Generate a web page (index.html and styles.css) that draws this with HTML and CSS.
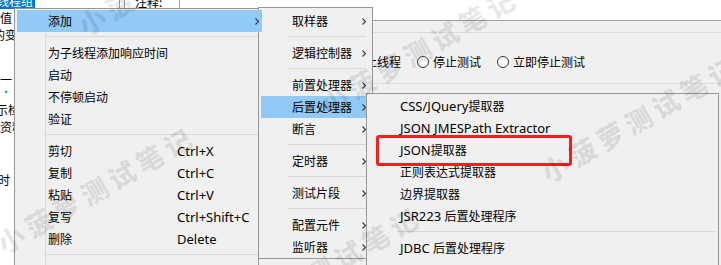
FILE: index.html
```html
<!DOCTYPE html>
<html lang="zh-CN">
<head>
<meta charset="utf-8">
<title>JMeter menu</title>
<link rel="stylesheet" href="styles.css">
</head>
<body>
<div class="app">
  <div class="tree">
    <div class="tree-sel"><span class="sel-text">线程组</span></div>
    <div class="n n1">值</div>
    <div class="n n2">的变量</div>
    <div class="n n3">一 <span class="or">J</span></div>
    <div class="n n4"><span class="tl">·</span> JS</div>
    <div class="n n5">示检</div>
    <div class="n n6">资料</div>
    <div class="n n7">时</div>
  </div>
  <div class="split"></div>
  <div class="detail">
    <div class="comment-row">
      <span class="comment-label">注释:</span>
      <div class="comment-input"></div>
    </div>
    <div class="group">
      <div class="group-box">
        <div class="radios">
          <span class="radio"><span class="circle"></span>停止线程</span>
          <span class="radio"><span class="circle"></span>停止测试</span>
          <span class="radio"><span class="circle"></span>立即停止测试</span>
        </div>
      </div>
    </div>
  </div>
</div>

<div class="menu m1">
  <div class="item sel first"><span class="label">添加</span><svg class="arrow" width="4" height="7" viewBox="0 0 4 7"><path d="M0.5 0.5 L3.5 3.5 L0.5 6.5" /></svg></div>
  <div class="sep"></div>
  <div class="item"><span class="label">为子线程添加响应时间</span></div>
  <div class="item"><span class="label">启动</span></div>
  <div class="item"><span class="label">不停顿启动</span></div>
  <div class="item"><span class="label">验证</span></div>
  <div class="sep"></div>
  <div class="item"><span class="label">剪切</span><span class="key en">Ctrl+X</span></div>
  <div class="item"><span class="label">复制</span><span class="key en">Ctrl+C</span></div>
  <div class="item"><span class="label">粘贴</span><span class="key en">Ctrl+V</span></div>
  <div class="item"><span class="label">复写</span><span class="key en">Ctrl+Shift+C</span></div>
  <div class="item"><span class="label">删除</span><span class="key en">Delete</span></div>
  <div class="sep"></div>
</div>

<div class="menu m2">
  <div class="item"><span class="label">取样器</span><svg class="arrow" width="4" height="7" viewBox="0 0 4 7"><path d="M0.5 0.5 L3.5 3.5 L0.5 6.5" /></svg></div>
  <div class="sep"></div>
  <div class="item"><span class="label">逻辑控制器</span><svg class="arrow" width="4" height="7" viewBox="0 0 4 7"><path d="M0.5 0.5 L3.5 3.5 L0.5 6.5" /></svg></div>
  <div class="sep"></div>
  <div class="item"><span class="label">前置处理器</span><svg class="arrow" width="4" height="7" viewBox="0 0 4 7"><path d="M0.5 0.5 L3.5 3.5 L0.5 6.5" /></svg></div>
  <div class="item sel"><span class="label">后置处理器</span><svg class="arrow" width="4" height="7" viewBox="0 0 4 7"><path d="M0.5 0.5 L3.5 3.5 L0.5 6.5" /></svg></div>
  <div class="item"><span class="label">断言</span><svg class="arrow" width="4" height="7" viewBox="0 0 4 7"><path d="M0.5 0.5 L3.5 3.5 L0.5 6.5" /></svg></div>
  <div class="sep"></div>
  <div class="item"><span class="label">定时器</span><svg class="arrow" width="4" height="7" viewBox="0 0 4 7"><path d="M0.5 0.5 L3.5 3.5 L0.5 6.5" /></svg></div>
  <div class="sep"></div>
  <div class="item"><span class="label">测试片段</span><svg class="arrow" width="4" height="7" viewBox="0 0 4 7"><path d="M0.5 0.5 L3.5 3.5 L0.5 6.5" /></svg></div>
  <div class="sep"></div>
  <div class="item"><span class="label">配置元件</span><svg class="arrow" width="4" height="7" viewBox="0 0 4 7"><path d="M0.5 0.5 L3.5 3.5 L0.5 6.5" /></svg></div>
  <div class="item"><span class="label">监听器</span><svg class="arrow" width="4" height="7" viewBox="0 0 4 7"><path d="M0.5 0.5 L3.5 3.5 L0.5 6.5" /></svg></div>
</div>

<div class="menu m3">
  <div class="item"><span class="label"><span class="en">CSS/JQuery</span>提取器</span></div>
  <div class="item"><span class="label en">JSON JMESPath Extractor</span></div>
  <div class="item"><span class="label"><span class="en">JSON</span>提取器</span></div>
  <div class="item"><span class="label">正则表达式提取器</span></div>
  <div class="item"><span class="label">边界提取器</span></div>
  <div class="item"><span class="label"><span class="en">JSR223 </span>后置处理程序</span></div>
  <div class="sep"></div>
  <div class="item"><span class="label"><span class="en">JDBC </span>后置处理程序</span></div>
</div>

<div class="highlight-box"></div>

<div class="wm wm-a">小菠萝测试笔记</div>
<div class="wm wm-b">小菠萝测试笔记</div>
<div class="wm wm-c">小菠萝测试笔记</div>
<div class="wm wm-d">小菠萝测试笔记</div>
<div class="wm wm-e">小菠萝测试笔记</div>
</body>
</html>
```

FILE: styles.css
```css
* { box-sizing: border-box; }

html, body {
  margin: 0;
  padding: 0;
}

body {
  width: 721px;
  height: 265px;
  overflow: hidden;
  position: relative;
  background: #ffffff;
  font-family: "Noto Sans", "Noto Sans CJK SC", sans-serif;
  font-size: 12px;
  color: #000;
}

.en { font-size: 13px; }

/* ---------- background application ---------- */
.app {
  display: flex;
  height: 265px;
}

.tree {
  width: 120px;
  border-right: 1px solid #a0a0a0;
  overflow: hidden;
  font-family: "Noto Sans CJK SC", sans-serif;
}

.tree-sel {
  height: 17px;
  margin-top: -8px;
  line-height: 17px;
  white-space: nowrap;
}

.sel-text {
  display: inline-block;
  margin-left: -3px;
  padding-right: 2px;
  background: #0078d7;
  color: #fff;
}

.n {
  height: 12px;
  line-height: 12px;
  white-space: nowrap;
}
.n1 { margin-top: 3px; }
.n2 { margin-top: 5px; margin-left: -7px; }
.n3 { margin-top: 33px; }
.n4 { margin-top: 0; }
.n5 { margin-top: 6px; margin-left: -4px; }
.n6 { margin-top: 5px; }
.n7 { margin-top: 41px; margin-left: -2px; }
.or { color: #c88a00; }
.tl { color: #1a9fa0; }

.split {
  width: 5px;
  border-right: 1px solid #a0a0a0;
}

.detail {
  flex: 1;
  display: flex;
  flex-direction: column;
}

.comment-row {
  height: 21px;
  border-bottom: 1px solid #a0a0a0;
  display: flex;
}

.comment-label {
  width: 54px;
  padding-left: 10px;
  line-height: 16px;
  margin-top: -6px;
  height: 16px;
  font-family: "Noto Sans CJK SC", sans-serif;
}

.comment-input {
  flex: 1;
  border-left: 1px solid #a0a0a0;
  background: #fff;
}

.group {
  flex: 1;
  background: #f0f0f0;
  padding-top: 11px;
}

.group-box {
  height: 52px;
  border-top: 1px solid #dcdcdc;
  border-bottom: 1px solid #dcdcdc;
}

.radios {
  margin-top: 21px;
  height: 16px;
  padding-left: 212px;
  display: flex;
  align-items: center;
  gap: 16px;
  font-family: "Noto Sans CJK SC", sans-serif;
  white-space: nowrap;
}

.radio {
  display: flex;
  align-items: center;
  line-height: 16px;
}

.circle {
  width: 12px;
  height: 12px;
  border: 1px solid #333;
  border-radius: 50%;
  background: #fff;
  margin-right: 4px;
}

/* ---------- popup menus ---------- */
.menu {
  position: absolute;
  background: #f0f0f0;
  border: 1px solid #979797;
  overflow: visible;
}

.item {
  height: 22px;
  margin: 0 2px;
  padding-left: 31px;
  display: flex;
  align-items: center;
  white-space: nowrap;
  position: relative;
}

.item.sel { background: #91c9f7; }

.arrow {
  margin-left: auto;
  display: block;
}
.arrow path {
  fill: none;
  stroke: #333;
  stroke-width: 1.1;
}

.sep {
  height: 1px;
  margin-top: 4px;
  margin-bottom: 5px;
  background: #d7d7d7;
}

.m1 {
  left: 14px;
  top: 8px;
  width: 245px;
  height: 257px;
  border-bottom: none;
  padding-top: 1px;
  z-index: 3;
}
.m1::after {
  content: "";
  position: absolute;
  left: 30px;
  top: 24px;
  bottom: 0;
  width: 1px;
  background: #dadada;
}
.m1 .item.first {
  margin-right: -4px;
  padding-right: 3px;
}
.m1 .label {
  width: 129px;
  flex: none;
}
.m1 .sep {
  margin-left: 30px;
  margin-right: 0;
  position: relative;
}

.m2 {
  left: 258px;
  top: 7px;
  width: 115px;
  height: 252px;
  padding-top: 2px;
  z-index: 2;
}
.m2 .item { padding-right: 4px; }
.m2 .sep {
  margin-left: 29px;
  margin-right: 6px;
}

.m3 {
  left: 366px;
  top: 93px;
  width: 353px;
  height: 172px;
  border-bottom: none;
  padding-top: 1px;
  z-index: 4;
}
.m3 .sep {
  margin-left: 30px;
  margin-right: 3px;
}

/* annotation */
.highlight-box {
  position: absolute;
  left: 376px;
  top: 135px;
  width: 196px;
  height: 31px;
  border: 3px solid #f51e1e;
  border-radius: 3px;
  z-index: 6;
}

/* watermark */
.wm {
  position: absolute;
  font-family: "Noto Sans CJK SC", sans-serif;
  font-weight: 900;
  font-size: 27px;
  letter-spacing: 5px;
  color: rgba(0, 0, 0, 0.09);
  white-space: nowrap;
  transform: translate(-50%, -50%) rotate(-30deg);
  pointer-events: none;
  z-index: 10;
}
.wm-a { left: 96px; top: 189px; }
.wm-b { left: 419px; top: 50px; }
.wm-c { left: 640px; top: 118px; }
.wm-d { left: 322px; top: 269px; }
.wm-e { left: 177px; top: -29px; }
```
